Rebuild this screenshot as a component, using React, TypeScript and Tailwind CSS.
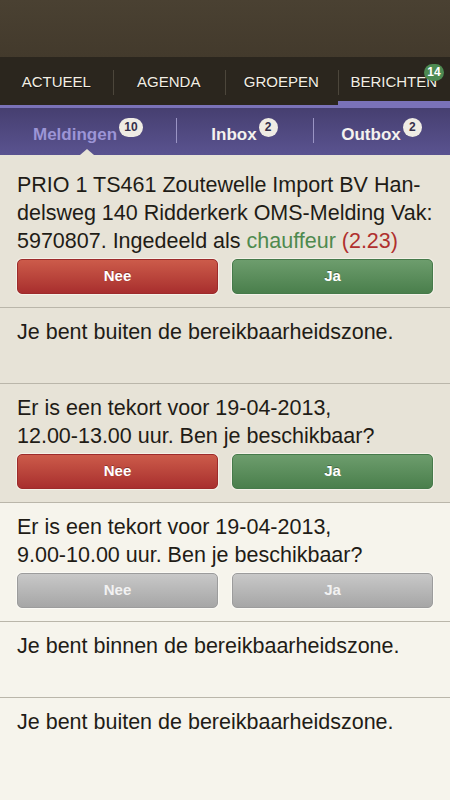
// Messages screen
// Top nav with tabs, sub tabs and a list of notifications

const font = { fontFamily: '"Liberation Sans", Arial, sans-serif' }

type Tone = 'active' | 'disabled'

function Buttons({ tone }: { tone: Tone }) {
  if (tone === 'disabled') {
    return (
      <div className="grid grid-cols-2 gap-[14px] mt-[4px]">
        <button className="h-[35px] rounded-[5px] border border-[#9c9c9c] bg-gradient-to-b from-[#c8c8c8] to-[#a6a6a6] text-[15px] font-bold text-[#f2f2f2] shadow-[0_0_0_1px_#fbfaf5]">
          Nee
        </button>
        <button className="h-[35px] rounded-[5px] border border-[#9c9c9c] bg-gradient-to-b from-[#c8c8c8] to-[#a6a6a6] text-[15px] font-bold text-[#f2f2f2] shadow-[0_0_0_1px_#fbfaf5]">
          Ja
        </button>
      </div>
    )
  }
  return (
    <div className="grid grid-cols-2 gap-[14px] mt-[4px]">
      <button className="h-[35px] rounded-[5px] border border-[#9d2b2b] bg-gradient-to-b from-[#cc5b4a] to-[#a82e2e] text-[15px] font-bold text-white shadow-[0_0_0_1px_#f4f1e8] [text-shadow:0_-1px_0_rgba(0,0,0,0.3)]">
        Nee
      </button>
      <button className="h-[35px] rounded-[5px] border border-[#467a4a] bg-gradient-to-b from-[#6d9d6d] to-[#4a7f4c] text-[15px] font-bold text-white shadow-[0_0_0_1px_#f4f1e8] [text-shadow:0_-1px_0_rgba(0,0,0,0.3)]">
        Ja
      </button>
    </div>
  )
}

function Item({
  children,
  light,
  buttons,
  grow,
}: {
  children: React.ReactNode
  light?: boolean
  buttons?: Tone
  grow?: boolean
}) {
  return (
    <div
      className={`px-[17px] pt-[10px] border-b border-[#bab6aa] shadow-[0_1px_0_#fbfaf4] ${
        light ? 'bg-[#f6f4ec]' : 'bg-[#e7e3d7]'
      } ${buttons ? 'pb-[13px]' : 'min-h-[76px]'} ${grow ? 'flex-1 border-b-0 shadow-none' : ''}`}
    >
      <p className="text-[21.5px] leading-[28px] text-[#1f1c16]">{children}</p>
      {buttons && <Buttons tone={buttons} />}
    </div>
  )
}

export default function App() {
  const nav = ['ACTUEEL', 'AGENDA', 'GROEPEN', 'BERICHTEN']

  return (
    <div style={font} className="w-[450px] h-[800px] overflow-hidden flex flex-col bg-[#f6f4ec]">
      {/* Top bar */}
      <div className="h-[57px] bg-gradient-to-b from-[#4a4132] to-[#433a2c]" />

      {/* Main nav */}
      <div className="relative bg-[#2b261e]">
        <div className="grid grid-cols-4 h-[48px]">
          {nav.map((label, i) => (
            <div key={label} className="relative flex items-center justify-center">
              {i > 0 && <div className="absolute left-0 top-[13px] h-[25px] w-px bg-[#4c463b]" />}
              <span className="text-[15px] text-[#f3efe4] [text-shadow:0_1px_1px_rgba(0,0,0,0.6)] mt-[2px]">
                {label}
              </span>
              {i === 3 && (
                <>
                  <span className="absolute right-[6px] top-[7px] min-w-[20px] h-[17px] px-[3px] rounded-full bg-[#4d8a52] text-white text-[12px] font-bold leading-[17px] text-center">
                    14
                  </span>
                  <div className="absolute left-0 right-0 bottom-0 h-[4px] bg-[#7a72b8]" />
                </>
              )}
            </div>
          ))}
        </div>
        <div className="h-[3px] bg-[#7a72b8]" />
      </div>

      {/* Sub tabs */}
      <div className="relative grid grid-cols-[176px_137px_1fr] h-[47px] bg-gradient-to-b from-[#463f70] to-[#5a5390]">
        <div className="flex items-center justify-center">
          <span className="text-[17px] font-bold text-[#9c95d6] mt-[6px]">Meldingen</span>
          <span className="ml-[2px] -mt-[8px] h-[19px] min-w-[24px] px-[4px] rounded-full bg-[#efece4] text-[12px] font-bold leading-[19px] text-center text-[#35304a]">
            10
          </span>
        </div>
        <div className="relative flex items-center justify-center">
          <div className="absolute left-0 top-[10px] h-[25px] w-px bg-[#9a94c4]" />
          <span className="text-[17px] font-bold text-[#f4f2ee] mt-[6px]">Inbox</span>
          <span className="ml-[2px] -mt-[8px] h-[19px] w-[19px] rounded-full bg-[#efece4] text-[12px] font-bold leading-[19px] text-center text-[#35304a]">
            2
          </span>
        </div>
        <div className="relative flex items-center justify-center">
          <div className="absolute left-0 top-[10px] h-[25px] w-px bg-[#9a94c4]" />
          <span className="text-[17px] font-bold text-[#f4f2ee] mt-[6px]">Outbox</span>
          <span className="ml-[2px] -mt-[8px] h-[19px] w-[19px] rounded-full bg-[#efece4] text-[12px] font-bold leading-[19px] text-center text-[#35304a]">
            2
          </span>
        </div>
        {/* pointer */}
        <div className="absolute bottom-0 left-[80px] w-0 h-0 border-l-[7px] border-r-[7px] border-b-[6px] border-l-transparent border-r-transparent border-b-[#e7e3d7]" />
      </div>

      {/* List */}
      <div className="flex-1 flex flex-col bg-[#e7e3d7] pt-[6px]">
        <Item buttons="active">
          PRIO 1 TS461 Zoutewelle Import BV Han-
          <br />
          delsweg 140 Ridderkerk OMS-Melding Vak:
          <br />
          5970807. Ingedeeld als <span className="text-[#4e8a4e]">chauffeur</span>{' '}
          <span className="text-[#b0302e]">(2.23)</span>
        </Item>
        <Item>Je bent buiten de bereikbaarheidszone.</Item>
        <Item buttons="active">
          Er is een tekort voor 19-04-2013,
          <br />
          12.00-13.00 uur. Ben je beschikbaar?
        </Item>
        <Item light buttons="disabled">
          Er is een tekort voor 19-04-2013,
          <br />
          9.00-10.00 uur. Ben je beschikbaar?
        </Item>
        <Item light>Je bent binnen de bereikbaarheidszone.</Item>
        <Item light grow>
          Je bent buiten de bereikbaarheidszone.
        </Item>
      </div>
    </div>
  )
}
